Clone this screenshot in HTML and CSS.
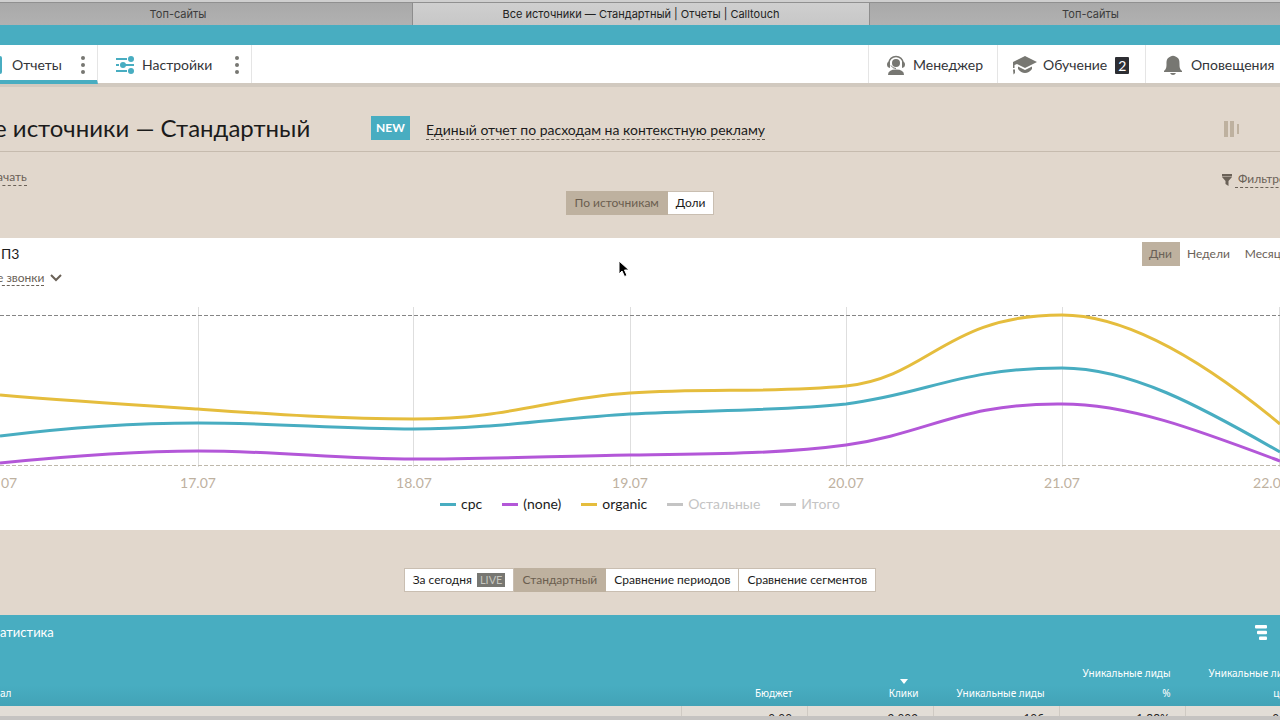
FILE: index.html
```html
<!DOCTYPE html>
<html lang="ru">
<head>
<meta charset="utf-8">
<title>Все источники — Стандартный | Отчеты | Calltouch</title>
<link rel="stylesheet" href="styles.css">
</head>
<body>
<div class="window">
  <div class="tabs">
    <button class="tab tab-first">Топ-сайты</button>
    <button class="tab tab-active">Все источники — Стандартный | Отчеты | Calltouch</button>
    <button class="tab tab-last">Топ-сайты</button>
  </div>
  <div class="page">
    <div class="brand-bar"></div>
    <nav class="nav">
      <div class="nav-item nav-reports">
        <span class="nav-stub"></span>
        <a href="#" class="nav-link">Отчеты</a>
        <button class="dots" aria-label="Меню отчетов"><i></i><i></i><i></i></button>
      </div>
      <div class="nav-item nav-settings">
        <svg class="icon" width="18" height="18" viewBox="0 0 18 18" fill="#48adc1" stroke="#48adc1"><path stroke-width="2" d="M0 3h11M0 9h3M5 9h13M0 15h11" fill="none"/><g stroke="none"><circle cx="15" cy="3" r="3"/><circle cx="7" cy="9" r="3"/><circle cx="15" cy="15" r="3"/></g></svg>
        <a href="#" class="nav-link">Настройки</a>
        <button class="dots" aria-label="Меню настроек"><i></i><i></i><i></i></button>
      </div>
      <div class="nav-item nav-manager">
        <svg class="icon" width="20" height="20" viewBox="0 0 20 20" fill="#777772"><path d="M3 8a7 6.500 0 0 1 14 0" fill="none" stroke="#777772" stroke-width="1.500"/><path d="M4 6v7Q1 12.500 1 9.500T4 6zM16 6v7q3-.500 3-3.500T16 6z"/><circle cx="10" cy="8" r="4"/><path d="M5 10.500q1.500 3 5 3" fill="none" stroke="#777772"/><path d="M2 20q0-5.500 8-5.500T18 20z"/></svg>
        <a href="#" class="nav-link">Менеджер</a>
      </div>
      <div class="nav-item nav-learn">
        <svg class="icon" width="24" height="20" viewBox="0 0 24 20" fill="#777772"><path d="M12 1l12 6-12 6-8-4-2.500 1v3H0V7zM5 11.500l7 3.500 7-3.500V14q-3 4-7 4t-7-4z"/><path d="M0 14.500h2V18l-1.500 1.500z"/></svg>
        <a href="#" class="nav-link">Обучение</a>
        <span class="count">2</span>
      </div>
      <div class="nav-item nav-alerts">
        <svg class="icon" width="20" height="20" viewBox="0 0 20 20" fill="#777772"><path d="M7.500 1.500q2.500-1.500 5 0C16.500 3 16.500 6 16.500 9c0 4 .500 5 2.500 7v1H1v-1c2-2 2.500-3 2.500-7 0-3 0-6 4-7.500zM7 18h6q-1 2-3 2t-3-2z"/></svg>
        <a href="#" class="nav-link">Оповещения</a>
      </div>
    </nav>
    <header class="head">
      <h1 class="title">е источники — Стандартный</h1>
      <span class="new">NEW</span>
      <a href="#" class="promo">Единый отчет по расходам на контекстную рекламу</a>
      <svg class="columns-icon" width="16" height="16" viewBox="0 0 16 16" fill="#beb19f"><path d="M0 0h4v16H0zM6 0h4v16H6zM13 3h2v10h-2z"/></svg>
    </header>
    <section class="tools">
      <div class="tools-row">
        <a href="#" class="small-link edge-link">ачать</a>
        <div class="filter">
          <svg width="10" height="12" viewBox="0 0 10 12" fill="#6a6157"><path d="M0 0h10v2.500H0zM0 3h10L6.500 7v5L3.500 10V7z"/></svg>
          <a href="#" class="small-link filter-link">Фильтровать</a>
        </div>
      </div>
      <div class="segmented">
        <button class="seg seg-on">По источникам</button><button class="seg">Доли</button>
      </div>
    </section>
    <section class="card">
      <div class="card-head">
        <div class="card-left">
          <h2 class="project">П3</h2>
          <div class="metric">
            <button class="small-link edge-link">е звонки</button>
            <svg width="12" height="8" viewBox="0 0 12 8" fill="none" stroke="#6a6157" stroke-width="2"><path d="M1 1l5 5 5-5"/></svg>
          </div>
        </div>
        <div class="periods">
          <button class="period period-on">Дни</button><button class="period">Недели</button><button class="period">Месяцы</button>
        </div>
      </div>
      <svg class="chart" viewBox="0 0 1280 192" role="img" aria-label="Звонки по дням">
        <path class="grid-line" d="M198.500 6v160M413.500 6v160M630.500 6v160M846.500 6v160M1062.500 6v160M1279.500 6v160"/>
        <path class="limit" d="M0 14.500H1280"/>
        <path class="base" d="M0 164.500H1280"/>
        <path class="line purple" d="M0 162C70 155 135 150 198 150C275 150 340 158 414 158C490 158 560 155 630 154C705 153 780 153 846 144C930 132 960 102 1062 103C1130 103 1200 130 1280 160"/>
        <path class="line teal" d="M0 135C65 127 130 122 198 122C275 122 340 128 414 128C490 128 560 117 630 113C705 109 780 110 846 103C930 92 960 67 1062 67C1130 67 1200 105 1280 151"/>
        <path class="line gold" d="M0 94C70 100 135 104 198 108C270 113 340 118 414 118C510 118 550 97 630 92C705 87 775 92 846 85C930 76 945 14 1062 14C1130 14 1210 65 1280 123"/>
        <g class="axis"><text x="9" y="187">07</text><text x="198" y="187">17.07</text><text x="414" y="187">18.07</text><text x="630" y="187">19.07</text><text x="846" y="187">20.07</text><text x="1062" y="187">21.07</text><text x="1271" y="187">22.07</text></g>
      </svg>
      <div class="legend">
        <button class="key teal">cpc</button>
        <button class="key purple">(none)</button>
        <button class="key gold">organic</button>
        <button class="key off">Остальные</button>
        <button class="key off">Итого</button>
      </div>
    </section>
    <div class="modes">
      <div class="segmented">
        <button class="seg">За сегодня <span class="live">LIVE</span></button><button class="seg seg-on">Стандартный</button><button class="seg">Сравнение периодов</button><button class="seg">Сравнение сегментов</button>
      </div>
    </div>
    <section class="stats">
      <div class="stats-head">
        <h2 class="stats-title">атистика</h2>
        <svg width="12" height="15" viewBox="0 0 12 15" fill="#fff"><rect width="12" height="3.500" rx="1"/><rect x="2" y="5.700" width="10" height="3.500" rx="1"/><rect x="4" y="11.500" width="8" height="3.500" rx="1"/></svg>
      </div>
      <table class="table">
        <colgroup><col><col class="num"><col class="num"><col class="num"><col class="num"><col class="num"></colgroup>
        <thead><tr><th>ал</th><th>Бюджет</th><th><button class="sort"><svg width="8" height="5" viewBox="0 0 8 5" fill="#fff"><path d="M0 0h8L4 5z"/></svg>Клики</button></th><th>Уникальные лиды</th><th>Уникальные лиды<br>%</th><th>Уникальные лиды<br>цена</th></tr></thead>
        <tbody><tr><td></td><td>0,00</td><td>9 009</td><td>106</td><td>1,88%</td><td>0,00</td></tr></tbody>
      </table>
    </section>
  </div>
  <div class="window-edge"></div>
  <svg class="pointer" width="12" height="18" viewBox="0 0 12 18"><path d="M1 1v13l3-3 2.500 5.500 2.500-1L6.500 10H11z" fill="#000" stroke="#fff"/></svg>
</div>
</body>
</html>
```
FILE: styles.css
```css
* { box-sizing: border-box; }
body { margin: 0; font-family: Lato, sans-serif; font-size: 12px; color: #1b1b1b; background: #e1d7cc; }
button { margin: 0; padding: 0; border: 0; background: none; font: inherit; color: inherit; white-space: nowrap; }
a { color: inherit; text-decoration: none; white-space: nowrap; }
h1, h2 { margin: 0; font-weight: 400; white-space: nowrap; }
svg { flex: none; display: block; }
.window { position: relative; display: flex; flex-direction: column; height: 100vh; overflow: hidden; }
.tabs { flex: none; display: grid; grid-template-columns: 412fr 457fr 411fr; height: 25px; padding-top: 2px; background: #cfcfcf; }
.tab { border-top: 1px solid #909090; background: linear-gradient(#a9a9a9, #b1b1b1); font-family: Inter, sans-serif; font-size: 11px; color: #3c3c3c; overflow: hidden; }
.tab-first { padding-right: 56px; }
.tab-last { padding-left: 31px; border-left: 1px solid #8d8d8d; }
.tab-active { border-left: 1px solid #8d8d8d; background: linear-gradient(#cfcfcf, #c7c7c7); color: #222; }
.page { flex: 1; min-height: 0; overflow: hidden; }
.brand-bar { height: 20px; background: #48adc1; }
.nav { display: flex; height: 42px; background: #fff; border-bottom: 4px solid #d1c9bf; font-size: 14px; color: #333539; }
.nav-item { display: flex; align-items: center; flex: none; border-right: 1px solid #e5e5e5; padding-top: 2px; }
.nav-link { padding-bottom: 1px; }
.nav-reports { width: 98px; border-bottom: 4px solid #48adc1; margin-bottom: -1px; padding-top: 5px; }
.nav-stub { width: 2px; height: 18px; margin-right: 10px; border-radius: 0 2px 2px 0; background: #48adc1; }
.nav-settings { width: 154px; padding-left: 18px; gap: 8px; }
.dots { display: flex; flex-direction: column; gap: 3px; margin-left: auto; margin-right: 12px; }
.dots i { width: 4px; height: 4px; border-radius: 50%; background: #777772; }
.nav-manager { width: 130px; margin-left: auto; padding-left: 17px; gap: 7px; border-left: 1px solid #e5e5e5; }
.nav-learn { width: 148px; padding-left: 15px; gap: 6px; }
.nav-alerts { width: 134px; padding-left: 17px; gap: 8px; border-right: 0; }
.count { margin-left: 2px; padding: 0 3px; border-radius: 1px; background: #2d2e33; color: #fff; line-height: 17px; }
.head { display: flex; align-items: center; height: 65px; padding-top: 20px; padding-bottom: 2px; border-bottom: 1px solid #c6bbae; padding-right: 40px; }
.title { width: 371px; font-size: 24px; line-height: 30px; text-indent: -6px; flex: none; }
.new { width: 39px; margin-right: 16px; line-height: 24px; background: #48adc1; color: #fff; text-align: center; font-size: 12px; font-weight: 700; }
.promo { font-size: 14px; line-height: 18px; border-bottom: 1px dashed #665c50; margin-top: 4px; }
.columns-icon { margin-left: auto; margin-top: 2px; }
.tools { height: 86px; padding-top: 18px; }
.tools-row { display: flex; justify-content: space-between; height: 21px; }
.small-link { height: 16px; line-height: 14px; color: #6a6157; border-bottom: 1px dashed #6a6157; }
.edge-link { margin-left: -3px; }
.filter { display: flex; width: 58px; gap: 3px; padding-top: 2px; overflow: hidden; }
.filter svg { margin-top: 2px; }
.filter-link { padding-left: 3px; }
.segmented { display: flex; justify-content: center; }
.seg { height: 24px; padding: 0 8px; background: #fff; color: #1b1b1b; border: 1px solid #c9beb1; line-height: 20px; }
.seg + .seg { border-left-width: 0; }
.seg-on { background: #beb19f; border-color: #beb19f; color: #6b5e4f; }
.card { height: 292px; background: #fff; }
.card-head { display: flex; justify-content: space-between; height: 63px; padding-top: 4px; }
.card-left { flex: none; }
.project { padding-left: 1px; font-size: 14px; line-height: 24px; }
.metric { display: flex; align-items: center; gap: 6px; padding-top: 4px; }
.periods { display: flex; width: 138px; height: 24px; overflow: hidden; }
.period { flex: none; padding: 0 8px 1px 7px; color: #6a6157; }
.period-on { background: #beb19f; }
.chart { width: 100%; overflow: hidden; }
.grid-line { stroke: #dedede; fill: none; }
.limit { stroke: #858585; stroke-dasharray: 4 2; }
.base { stroke: #beb8ab; stroke-dasharray: 4 2; }
.line { fill: none; stroke: var(--ink); stroke-width: 3; }
.teal { --ink: #48adc1; }
.purple { --ink: #b357d8; }
.gold { --ink: #e5bd3d; }
.axis { fill: #beb19f; font-size: 14px; text-anchor: middle; }
.legend { display: flex; justify-content: center; gap: 20px; font-size: 14px; line-height: 22px; }
.key { display: flex; align-items: center; gap: 5px; }
.key::before { content: ""; width: 16px; height: 3px; background: var(--ink); }
.off { --ink: #c4c4c4; color: #c4c4c4; }
.modes { padding: 38px 0 23px; }
.live { margin-left: 2px; padding: 0 3px; background: #777772; color: #c6c6bf; font-size: 11px; line-height: 14px; display: inline-block; }
.stats { background: linear-gradient(#48adc1 70px, #42a3b7 91px); color: #fff; }
.stats-head { display: flex; justify-content: space-between; align-items: center; height: 34px; padding-right: 13px; }
.stats-title { font-size: 13px; }
.table { width: calc(100% + 32px); table-layout: fixed; border-collapse: collapse; font-family: "Noto Sans", sans-serif; font-size: 10px; line-height: 20px; }
.num { width: 126px; }
th { height: 57px; padding: 0 15px 3px 0; font-weight: 400; text-align: right; vertical-align: bottom; white-space: nowrap; }
th:first-child { text-align: left; }
td { height: 26px; padding: 3px 15px 3px 0; text-align: right; background: #e2ddd6; color: #222; border-right: 1px solid #cfcac3; font-size: 12px; line-height: 18px; }
.sort { display: inline-flex; flex-direction: column; align-items: center; line-height: 20px; }
.sort svg { margin-bottom: -1px; }
.window-edge { flex: none; height: 4px; background: #c5c3c1; }
.pointer { position: absolute; left: 618px; top: 260px; }
```
